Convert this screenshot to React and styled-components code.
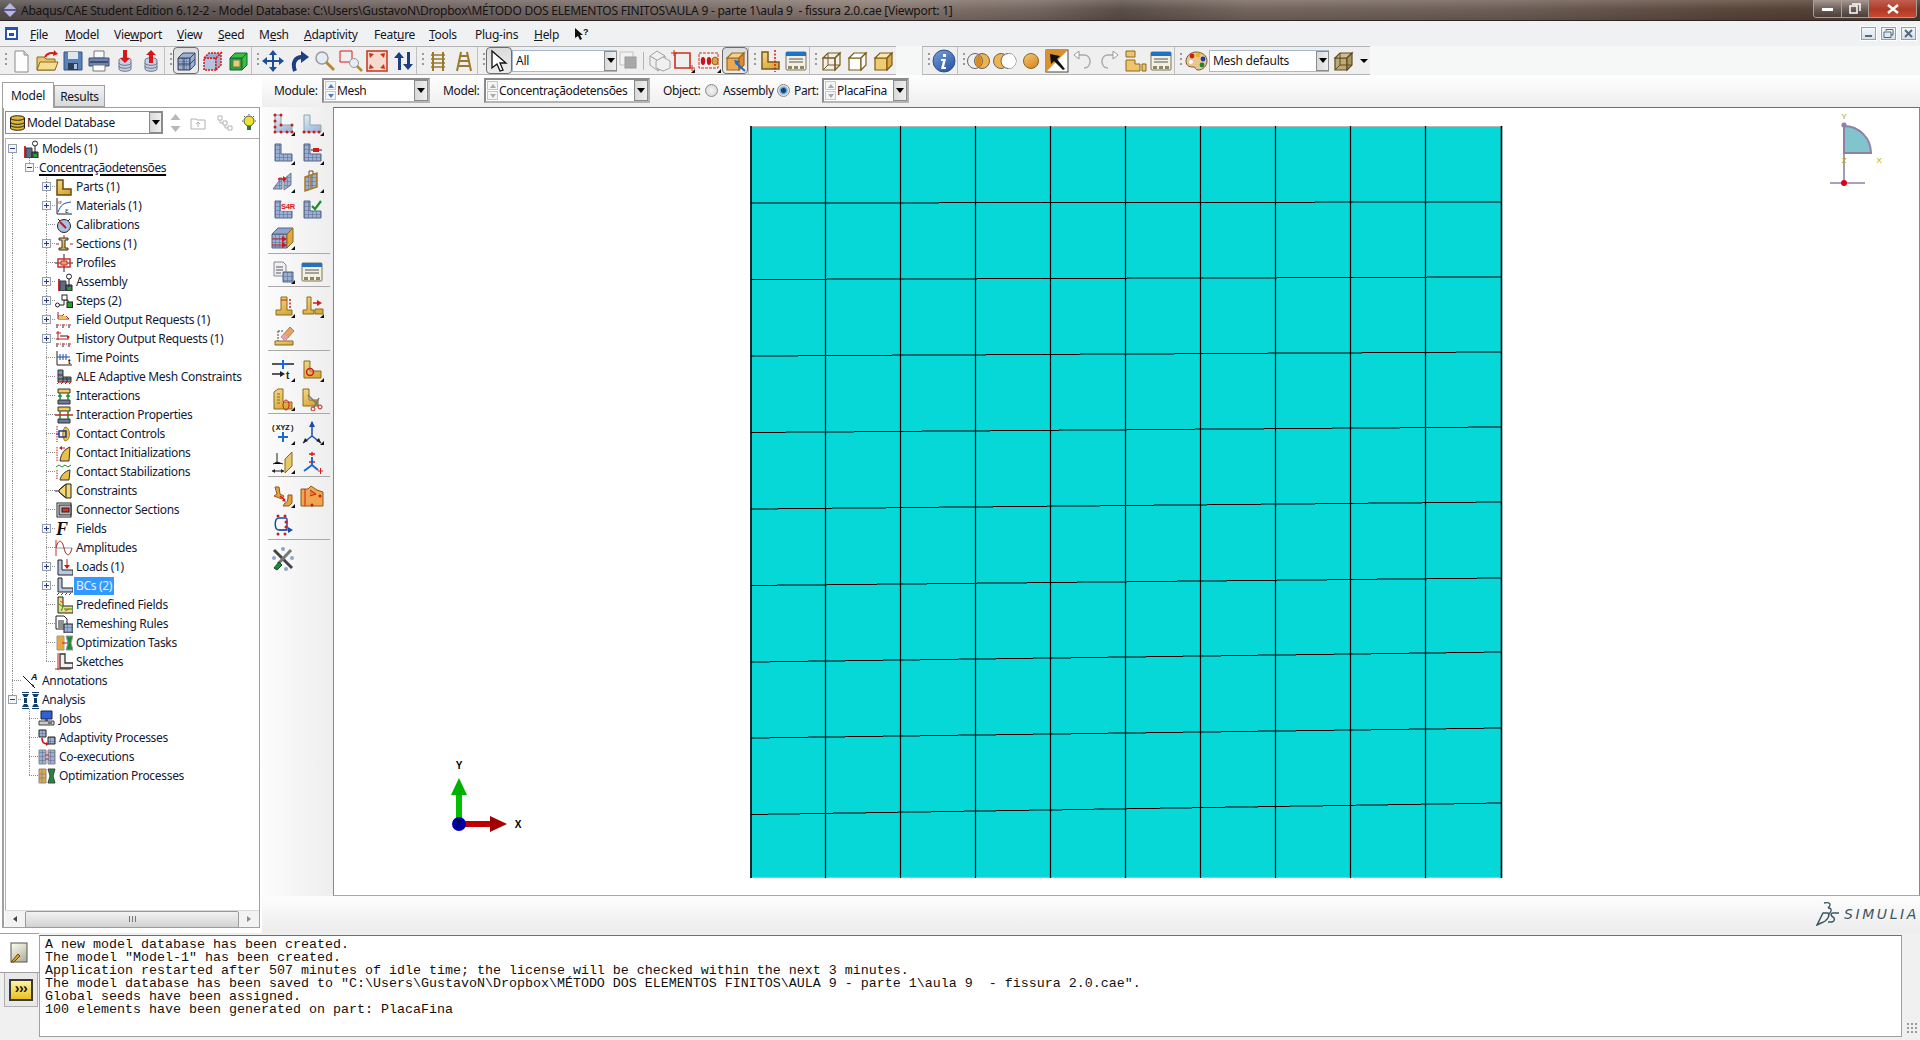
import React from "react";
import styled, { createGlobalStyle } from "styled-components";

const UI = `"Noto Sans", "Open Sans", "Liberation Sans", sans-serif`;

const Global = createGlobalStyle`
  html, body { margin: 0; padding: 0; overflow: hidden; background: #f0f0f0; }
  body { font-family: ${UI}; font-size: 12px; letter-spacing: -0.27px; color: #101828; }
`;

/* ---------- icons ---------- */
const Dots = ({ p, c = "#d01818", r = 1.5 }) => p.map(([x, y], i) => <circle key={i} cx={x} cy={y} r={r} fill={c} />);
const L = "M4 3h6v10h11v7H4z";
const MeshL = () => <path d={L} fill="url(#grid)" stroke="#56658a" />;
const GoldL = "M4 3h6v10h11v7H4z";
const Cube = ({ f = "none", s = "#7a5a18", t = "none", r = "none" }) => (
  <g stroke={s} strokeWidth="1.2">
    <path d="M4 9h12v12H4z" fill={f} />
    <path d="M4 9l5-5h12l-5 5z" fill={t} />
    <path d="M16 9l5-5v12l-5 5z" fill={r} />
  </g>
);
const Drum = ({ up }) => (
  <g>
    <path d="M6 11c0-3 12-3 12 0v9c0 3-12 3-12 0z" fill="#c6cfdd" stroke="#6a7790" />
    <path d="M6 14c0 3 12 3 12 0M6 17c0 3 12 3 12 0" fill="none" stroke="#6a7790" />
    <path d={up ? "M12 1l5 5h-3v8h-4V6H7z" : "M10 1h4v8h3l-5 5-5-5h3z"} fill="#d81818" />
  </g>
);
const Win = () => (
  <g>
    <rect x="2" y="3" width="20" height="18" rx="1" fill="#f3efe2" stroke="#7d7458" />
    <rect x="2" y="3" width="20" height="4" fill="#1f73c4" />
    <path d="M5 10h14M5 13h14" stroke="#555" />
    <path d="M4 17h4v3H4zM10 17h4v3h-4zM16 17h4v3h-4z" fill="#8f8663" />
  </g>
);
const Rail = () => <g stroke="#9a7a2c" strokeWidth="2"><path d="M7 3v19M17 3v19" /><path d="M5 6h14M5 10h14M5 14h14M5 18h14" strokeWidth="1.5" /></g>;

const T = {
  /* toolbar */
  new: <><path d="M6 2h9l4 4v17H6z" fill="#fdfdfd" stroke="#8a8a8a" /><path d="M15 2v4h4" fill="#ddd" stroke="#8a8a8a" /></>,
  open: <><path d="M2 8h7l2 2h9v11H2z" fill="#e9c568" stroke="#8a6a1a" /><path d="M2 21l3-8h18l-3 8z" fill="#f6dc8e" stroke="#8a6a1a" /><path d="M10 8c2-4 7-5 10-3" fill="none" stroke="#d81818" strokeWidth="2" /><path d="M19 1l4 4-5 2z" fill="#d81818" /></>,
  save: <><path d="M3 3h18v18H3z" fill="#5b82b8" stroke="#33537f" /><path d="M7 3h10v7H7z" fill="#dfe6ee" /><path d="M7 14h10v7H7z" fill="#2c3d58" /><path d="M13 15h3v5h-3z" fill="#b7c3d3" /></>,
  print: <><path d="M7 2h10v7H7z" fill="#fafafa" stroke="#777" /><path d="M2 9h20v8H2z" fill="#6c86b4" stroke="#3e4f72" /><path d="M3 12h18v2H3z" fill="#3e4f72" /><path d="M6 16h12v6H6z" fill="#fff" stroke="#777" /></>,
  dbDown: <Drum />,
  dbUp: <Drum up />,
  wire: <><path d="M4 9h12v12H4z" fill="url(#grid)" stroke="#39455f" /><path d="M4 9l5-5h12l-5 5zM16 9l5-5v12l-5 5z" fill="#9cb0d2" stroke="#39455f" /><path d="M10 9v12M4 15h12M16 15l5-5" stroke="#39455f" /></>,
  hidden: <><path d="M4 9h12v12H4z" fill="#b4c4e0" stroke="#d81818" strokeDasharray="2 1" strokeWidth="1.5" /><path d="M4 9l5-5h12l-5 5zM16 9l5-5v12l-5 5z" fill="#9db0d4" stroke="#d81818" strokeDasharray="2 1" strokeWidth="1.5" /></>,
  shaded: <><path d="M4 9h12v12H4z" fill="#2da32d" stroke="#164" /><path d="M4 9l5-5h12l-5 5zM16 9l5-5v12l-5 5z" fill="#3cc03c" stroke="#164" /><path d="M7 11h7v7H7z" fill="#e0d07c" stroke="#775" /></>,
  move: <g fill="#1d4f96"><path d="M11 6h2v12h-2zM6 11h12v2H6z" /><path d="M12 1l4 5H8zM12 23l4-5H8zM1 12l5-4v8zM23 12l-5-4v8z" /></g>,
  rotate: <><path d="M8 22c-3-8 0-14 7-14" fill="none" stroke="#1d3f80" strokeWidth="4" /><path d="M14 2l8 6-8 6z" fill="#1d3f80" /></>,
  zoom: <><circle cx="9" cy="9" r="6" fill="#e4ecf5" stroke="#9a9a9a" strokeWidth="1.5" /><path d="M13 13l8 8" stroke="#b58a34" strokeWidth="3" /></>,
  boxZoom: <><path d="M1 2h12v11H1z" fill="none" stroke="#d81818" /><circle cx="15" cy="14" r="4.5" fill="#e4ecf5" stroke="#999" /><path d="M18 17l5 5" stroke="#b58a34" strokeWidth="2.5" /></>,
  fit: <><rect x="2" y="2" width="20" height="20" fill="#f6dad0" stroke="#c8341c" strokeWidth="1.5" /><path d="M4 4l5 1-4 4zM20 4l-1 5-4-4zM4 20l1-5 4 4zM20 20l-5-1 4-4z" fill="#c8341c" /></>,
  cycle: <g fill="#1d3f80"><path d="M6 3l5 6H8v12H5V9H1z" transform="translate(2)" /><path d="M14 3h3v12h3l-5 6-5-6h4z" transform="translate(2)" /></g>,
  rail: <Rail />,
  rail2: <g stroke="#9a7a2c" strokeWidth="2"><path d="M9 3L5 22M15 3l4 19" /><path d="M8 7h8M7 12h10M6 17h12" strokeWidth="2" /></g>,
  select: <path d="M5 2v17l5-4 3 7 3-1-3-7h6z" fill="#fff" stroke="#111" strokeWidth="1.3" />,
  overlay: <><rect x="3" y="3" width="13" height="13" fill="#f2f2f2" stroke="#c4c4c4" /><rect x="8" y="8" width="11" height="11" fill="#a8a8a8" stroke="#9a9a9a" /></>,
  graycube: <g stroke="#a4a4a4" fill="#f0f0f0"><path d="M2 7l7-5 8 5-7 5z" /><path d="M2 7v9l8 6v-10zM10 12l7-5v9l-7 6z" /><path d="M8 12l7-4 7 4v7l-7 3-7-3z" /></g>,
  redRect: <><path d="M4 4h15v15H4z" fill="none" stroke="#c8341c" strokeWidth="1.6" /><path d="M1 1v6M-2 4h6M19 16v6M16 19h6" stroke="#c8341c" transform="translate(2)" /></>,
  redOval: <><path d="M2 4h19v15H2z" fill="none" stroke="#c8341c" strokeDasharray="3 1" /><ellipse cx="6" cy="12" rx="2.2" ry="4" fill="#c8141c" /><ellipse cx="12" cy="12" rx="2.2" ry="4" fill="#c8141c" /><ellipse cx="18" cy="12" rx="3" ry="4" fill="#e0a040" stroke="#8a6a1a" /></>,
  orangeCube: <><Cube f="#f0a850" t="#f8cf8a" r="#dd8a30" s="#9a6a20" /><path d="M22 22l-9-8" stroke="#1a6ad0" strokeWidth="2" /><path d="M11 11l6 1-4 4z" fill="#1a6ad0" /></>,
  lSplit: <><path d={GoldL} fill="url(#gold)" stroke="#7a5a18" strokeWidth="1.5" /><path d="M17 1v22" stroke="#d81818" strokeWidth="1.5" strokeDasharray="2 1.5" /></>,
  table: <Win />,
  cubeWire: <><Cube s="#7a5a18" /><path d="M9 4v12h12M9 16l-5 5" stroke="#7a5a18" fill="none" /></>,
  cubeOpen: <Cube f="#fff" t="#fff" r="#fff" />,
  cubeGold: <Cube f="#f0cc6e" t="#f9e6ae" r="#d9ac48" />,
  info: <><circle cx="12" cy="12" r="11" fill="url(#info)" stroke="#2e4f8f" /><path d="M14 5h-3v3h3zM9 10h5l-2 8h2v2H9l2-8H9z" fill="#fff" /></>,
  ov1: <><circle cx="15" cy="12" r="7.5" fill="#f0b44e" stroke="#666" /><circle cx="8" cy="12" r="7.5" fill="none" stroke="#666" /><path d="M11.5 6a7.5 7.5 0 0 0 0 12a7.5 7.5 0 0 0 0-12z" fill="#d98a20" /></>,
  ov2: <><circle cx="8" cy="12" r="7.5" fill="#f0b44e" stroke="#666" /><circle cx="15.5" cy="12" r="7.5" fill="#fff" stroke="#666" /><path d="M15.5 4.5a7.5 7.5 0 0 1 0 15" fill="#fff" /></>,
  ov3: <circle cx="12" cy="12" r="7.5" fill="url(#gold2)" stroke="#8a6a1a" />,
  arrowBox: <><rect x="1" y="1" width="22" height="22" fill="#fff" stroke="#444" /><path d="M1 1h22L1 23z" fill="#d89030" /><path d="M5 5l10 2-3 3 8 10-2 1-9-9-3 3z" fill="#111" /></>,
  undo: <><path d="M7 6h6c8 0 8 13 0 13" fill="none" stroke="#aaa" strokeWidth="1.5" /><path d="M8 2v8L3 6z" fill="#fff" stroke="#999" /></>,
  redo: <><path d="M17 6h-6c-8 0-8 13 0 13" fill="none" stroke="#aaa" strokeWidth="1.5" /><path d="M16 2v8l5-4z" fill="#fff" stroke="#999" /></>,
  boxes: <g fill="#f0c468" stroke="#8a6a1a"><path d="M3 2h9v6H3zM3 11h9v4h5v7H3z" /><path d="M19 15h4v7h-4z" /></g>,
  palette: <><path d="M12 3c7 0 11 4 11 9s-4 9-9 9c-3 0-2-3-4-3-3 0-8 0-8-6 0-5 5-9 10-9z" fill="#e8c690" stroke="#7a5a28" /><Dots p={[[8, 7]]} c="#d81818" r="2.4" /><Dots p={[[14, 6]]} c="#e8b818" r="2.4" /><Dots p={[[19, 10]]} c="#1838b8" r="2.4" /><Dots p={[[18, 16]]} c="#188830" r="2.4" /><Dots p={[[7, 13]]} c="#fff" r="2" /></>,
  oliveCube: <><Cube f="#bda878" t="#cfbc92" r="#a89464" s="#5e4c20" /><path d="M9 4v12h12M9 16l-5 5" stroke="#5e4c20" fill="none" /></>,
  /* toolbox */
  seedPart: <><path d={L} fill="url(#blue)" stroke="#8aa" /><Dots p={[[4, 3], [10, 3], [4, 9], [4, 15], [4, 20], [10, 13], [10, 20], [16, 20], [21, 20], [21, 13]]} /></>,
  seedEdge: <><path d={L} fill="url(#blue)" stroke="#8aa" /><Dots p={[[4, 20], [9, 20], [14, 20], [19, 20]]} /></>,
  meshL: <MeshL />,
  meshBar: <><MeshL /><path d="M11 9h11" stroke="#222" /><path d="M13 7h6v4h-6z" fill="#d81818" /></>,
  meshMove: <><path d="M2 20l6-8v-3l3 0v11z" fill="url(#grid)" stroke="#778" /><path d="M13 10l7-6v12l-7 5z" fill="url(#grid)" stroke="#778" /><path d="M7 10h6" stroke="#d81818" strokeWidth="1.5" /><path d="M12 7l4 3-4 3z" fill="#d81818" /></>,
  meshFrame: <><path d="M5 8l12-4v14L5 22z" fill="url(#grid)" stroke="#b07818" strokeWidth="1.5" /><path d="M11 6v14" stroke="#b07818" strokeWidth="1.5" /><path d="M9 6V2h4v3" fill="none" stroke="#555" /></>,
  meshS4R: <><MeshL /><rect x="10" y="4" width="14" height="9" fill="#f0f0f0" /><text x="10" y="11" fontSize="7.5" fontWeight="700" fontFamily="Liberation Sans" fill="#d81818">S4R</text></>,
  meshCheck: <><MeshL /><path d="M12 8l3 3 6-8" fill="none" stroke="#189028" strokeWidth="2.2" /></>,
  meshCube: <><path d="M1 8h15v14H1z" fill="url(#grid)" stroke="#56658a" /><path d="M1 8l6-6h15l-6 6z" fill="#8fa4c8" stroke="#56658a" /><path d="M16 8l6-6v14l-6 6z" fill="#e2a83a" stroke="#8a6a1a" /><path d="M1 13h11M1 19h11" stroke="#c81818" /><path d="M11 10l5 3-5 3zM11 16l5 3-5 3z" fill="#c81818" /></>,
  docMesh: <><path d="M3 2h9l3 3v11H3z" fill="#f0f0f0" stroke="#889" /><path d="M5 7h7M5 10h7M5 13h5" stroke="#556" /><path d="M12 12h10v10H12z" fill="url(#grid)" stroke="#56658a" /></>,
  tBeamDash: <><path d="M10 3h6v13h5v5H5v-5h5z" fill="url(#gold)" stroke="#8a6a1a" /><path d="M10 6h6" stroke="#d81818" /><path d="M19 5v10" stroke="#d81818" strokeDasharray="2 1.5" strokeWidth="1.5" /></>,
  tBeamArrow: <><path d="M7 3h4v13h3v4H3v-4h4zM15 15h8v5h-8z" fill="url(#gold)" stroke="#8a6a1a" /><path d="M13 9h6" stroke="#d81818" strokeWidth="1.5" /><path d="M17 6l5 3-5 3z" fill="#d81818" /></>,
  eraser: <><path d="M4 18h18v4H4z" fill="url(#gold)" stroke="#8a6a1a" /><path d="M7 8v10M7 8h5" stroke="#444" strokeDasharray="2 1" /><path d="M10 14l9-10 4 4-9 10z" fill="#f0a060" stroke="#887" /><path d="M10 14l4 4 3-3-4-4z" fill="#e8a0b8" /></>,
  dtLine: <><path d="M1 6h9M14 6h9" stroke="#222" strokeWidth="1.5" /><path d="M12 2v9M8 6h8" stroke="#1a6ad0" strokeWidth="2" /><path d="M1 16h10" stroke="#222" strokeWidth="1.5" /><path d="M9 13l5 3-5 3z" fill="#222" /><text x="15" y="21" fontSize="10" fontWeight="700" fontFamily="Liberation Sans" fill="#222">t</text></>,
  lCircle: <><path d={GoldL} fill="url(#gold)" stroke="#8a6a1a" /><circle cx="10" cy="14" r="3.5" fill="none" stroke="#d81818" strokeWidth="1.5" /></>,
  lBlock: <><path d="M3 5l4-3h5v13h9v7H3z" fill="url(#gold)" stroke="#8a6a1a" /><path d="M6 7h3M6 10h3M6 13h3M6 16h3" stroke="#8a6a1a" /><ellipse cx="15" cy="18" rx="3" ry="5" fill="none" stroke="#d81818" /></>,
  lScissors: <><path d="M3 2h6v11h9v6H3z" fill="url(#gold)" stroke="#8a6a1a" /><path d="M8 8l10 10M19 11l-5 9" stroke="#777" strokeWidth="1.5" /><circle cx="20" cy="20" r="2" fill="none" stroke="#c81818" /><circle cx="13" cy="22" r="2" fill="none" stroke="#c81818" /></>,
  xyz: <><text x="0" y="9" fontSize="8" fontWeight="700" fontFamily="Liberation Mono" letterSpacing="-0.1" fill="#222">(XYZ)</text><path d="M12 11v10M7 16h10" stroke="#1a6ad0" strokeWidth="2" /></>,
  axes: <><path d="M12 1v14M12 15L3 22M12 15l9 7" stroke="#1a4ab0" strokeWidth="1.5" /><path d="M12 0l3 6H9z" fill="#1a4ab0" /><path d="M3 22l2-5 3 3zM21 22l-2-5-3 3z" fill="#222" /></>,
  axesPlane: <><path d="M14 9l7-7v14l-7 7z" fill="#e8c66a" stroke="#8a6a1a" /><path d="M6 3v9M2 14l4-2 6 2" stroke="#222" /><path d="M1 21h12" stroke="#222" /><path d="M1 21l3-2v4zM13 21l-3-2v4z" fill="#222" /></>,
  datum: <><path d="M12 2v4M9 4h6M9 12h6" stroke="#d81818" strokeWidth="1.4" /><path d="M12 7v8" stroke="#1a6ad0" strokeWidth="2" /><path d="M12 15L4 21M12 15l6 5" stroke="#1a6ad0" strokeWidth="2" /><path d="M18 21h5M20.5 18v6" stroke="#d81818" /></>,
  morph: <><path d="M4 3h4l1 7 4 2-2 3-8-3 3-2z" fill="#e8a040" stroke="#8a5a18" /><path d="M17 11h4v8l-3 3h-6l2-3c2 0 3-2 3-8z" fill="#e8a040" stroke="#8a5a18" /><path d="M9 12l5 4" stroke="#d81818" strokeWidth="1.5" /><path d="M15 18l-4-1 2-3z" fill="#d81818" /></>,
  morphSolid: <><path d="M1 5h7l3-3 6 4 6 2v14H1z" fill="#efa650" stroke="#8a5a18" /><path d="M5 5v17" stroke="#d81818" /><path d="M10 6l6 4-6 2" fill="#d8803a" stroke="#d81818" /><Dots p={[[20, 12], [12, 21]]} /></>,
  loop: <><path d="M8 5h7c1 0 1 1 1 2v8c0 1 0 2-1 2H8c-5 0-5-12 0-12z" fill="none" stroke="#1a4ab0" strokeWidth="1.5" /><path d="M8 17h10" stroke="#1a4ab0" /><path d="M17 14l5 3-5 3z" fill="#1a4ab0" /><Dots p={[[7, 3], [14, 3], [15, 9], [15, 14], [7, 21], [14, 21]]} /></>,
  tools: <><path d="M3 3l18 18" stroke="#444" strokeWidth="3" /><path d="M20 3L7 17" stroke="#777" strokeWidth="3" /><path d="M3 21l5-6 3 3-5 5z" fill="#1f8a3a" stroke="#0d4a1c" /><Dots p={[[3, 11], [21, 11], [15, 22], [12, 2]]} c="#8fa6c8" r="2" /></>,
  /* tree */
  model: <><path d="M3 6h2v12H3z" fill="#c83030" /><path d="M5 8h6v10H5z" fill="#5d6c80" stroke="#2e3a4c" /><path d="M11 12h6v6h-6z" fill="#4f5d70" stroke="#222" /><path d="M13 14h3v3h-3z" fill="#28a028" /><circle cx="14" cy="3.5" r="2.5" fill="#fff" stroke="#222" /><path d="M14 6v8" stroke="#222" /></>,
  parts: <path d="M2 2h6v9h8v6H2z" fill="url(#gold)" stroke="#6a4a0a" strokeWidth="1.5" />,
  mat: <><path d="M2 1v16h15" fill="none" stroke="#222" /><path d="M3 15c3-7 5-9 13-10" fill="none" stroke="#1a4ab0" /><text x="10" y="16" fontSize="9" fontFamily="Liberation Serif" fill="#222">ε</text><text x="3" y="7" fontSize="7" fontFamily="Liberation Serif" fill="#222">σ</text></>,
  calib: <><circle cx="9" cy="10" r="6.5" fill="#aebfe0" stroke="#222" /><path d="M5 6l6 6" stroke="#c81818" strokeWidth="2" /><path d="M3 3l2 2M15 3l-2 2" stroke="#222" /></>,
  sect: <><path d="M4 3h9v2h-3v8h3v2H4v-2h3V5H4z" fill="url(#gold)" stroke="#333" /><path d="M9 0v3M15 9h3M1 9h3" stroke="#c81818" /></>,
  prof: <><path d="M9 0v18M0 9h18" stroke="#222" /><rect x="3" y="5" width="12" height="8" fill="none" stroke="#c83030" strokeWidth="1.5" /><rect x="6" y="7" width="6" height="4" fill="#f0a060" stroke="#c83030" /></>,
  steps: <><circle cx="2.5" cy="13" r="2" fill="#fff" stroke="#222" /><path d="M5 13h4M9 13V8h4v3" fill="none" stroke="#222" /><rect x="7" y="3" width="5" height="5" fill="#fff" stroke="#222" /><rect x="12" y="10" width="5.5" height="5.5" fill="#28a028" stroke="#222" /></>,
  field: <><path d="M3 1v7h11l-3-3M3 5h4l2-2" fill="none" stroke="#a02020" /><path d="M4 5h7v3H4z" fill="#f0c060" /><path d="M2 13v4M8 13v4M14 13v4" stroke="#222" /><path d="M3 14h3M9 14h3M15 14h2" stroke="#c81818" strokeDasharray="1 1" /></>,
  hist: <><path d="M3 1v9M1 3h5M1 9h13" stroke="#c81818" /><path d="M12 5l3 2-3 2z" fill="#c81818" /><path d="M5 6h7" stroke="#222" /><path d="M2 13v4M8 13v4M14 13v4" stroke="#222" /><path d="M3 14h3M9 14h3M15 14h2" stroke="#c81818" strokeDasharray="1 1" /></>,
  time: <><path d="M2 2v14h15" fill="none" stroke="#222" /><path d="M2 8h13M5 5v6M8 5v6M11 5v6" stroke="#1a4ab0" /><text x="13" y="15" fontSize="8" fontWeight="700" fontFamily="Liberation Sans" fill="#222">t</text></>,
  ale: <><path d="M3 2h5v7h8v5H3z" fill="#8090a8" stroke="#333" /><path d="M3 7h5M3 11h13M8 9v5M12 9v5" stroke="#333" /><path d="M2 16l2-2M6 16l2-2M10 16l2-2M14 16l2-2" stroke="#c81818" /></>,
  inter: <><path d="M3 2h12v4H3z" fill="#f0cc60" stroke="#333" /><path d="M3 13h12v4H3z" fill="#7078a0" stroke="#333" /><path d="M5 6v7M13 6v7M3 9h4M11 9h4" stroke="#189028" strokeWidth="1.5" /></>,
  interP: <><path d="M3 1h12v4H3z" fill="#f0cc60" stroke="#333" /><path d="M3 13h12v4H3z" fill="#7078a0" stroke="#333" /><path d="M5 5v8M13 5v8" stroke="#189028" strokeWidth="1.5" /><path d="M0 9h18" stroke="#c83030" strokeWidth="1.6" /></>,
  contact: <><path d="M2 1v16" stroke="#c81818" strokeDasharray="1.5 1" /><path d="M10 2c6 0 6 14 0 14-3-4-3-10 0-14z" fill="#e8c050" stroke="#a08020" /><rect x="4" y="6" width="7" height="6" fill="none" stroke="#1a2a90" strokeWidth="1.4" /><path d="M1 9h3" stroke="#1a2a90" /></>,
  contactI: <><path d="M2 3v14" stroke="#c81818" strokeDasharray="1.5 1" /><path d="M5 17c1-8 5-12 10-14l-1 14z" fill="#e8c050" stroke="#333" /><path d="M10 4H5" stroke="#c81818" /><path d="M4 4l3-2v4z" fill="#c81818" /></>,
  contactS: <><path d="M1 4l3-2 3 2 3-2 3 2 3-2" fill="none" stroke="#189028" /><path d="M2 7v10" stroke="#c81818" strokeDasharray="1.5 1" /><path d="M5 17c1-5 5-9 10-10l-1 10z" fill="#e8c050" stroke="#333" /></>,
  constr: <><path d="M11 2h5v14h-5L4 10V8z" fill="#f5d870" stroke="#222" /><path d="M4 9H0M11 2L4 8M11 16l-7-6" stroke="#222" /><path d="M11 2v14" stroke="#222" /></>,
  conn: <><rect x="2" y="2" width="14" height="14" fill="#fff" stroke="#222" /><rect x="4" y="4" width="12" height="10" fill="#b8b8b8" stroke="#222" /><rect x="7" y="7" width="7" height="4" fill="#d83030" stroke="#222" /></>,
  fields: <text x="1" y="15" fontSize="18" fontStyle="italic" fontWeight="700" fontFamily="Liberation Serif" fill="#111">F</text>,
  ampl: <><path d="M1 1v16" stroke="#c83030" /><path d="M1 9h16" stroke="#999" /><path d="M1 9c2-9 6-9 8 0s6 9 8 0" fill="none" stroke="#a02020" /></>,
  loads: <><path d="M3 2h4v10h11v5H3z" fill="#b8c8e4" stroke="#222" /><path d="M12 1v8" stroke="#c81818" /><path d="M9 7h6l-3 4z" fill="#c81818" /></>,
  bcs: <><path d="M3 1h4v10h11v4H3z" fill="#b8c8e4" stroke="#222" /><path d="M2 18l2-2M6 18l2-2M10 18l2-2M14 18l2-2" stroke="#c81818" /></>,
  pre: <><path d="M3 1h5v9h10v7H3z" fill="#e8e080" stroke="#222" /><path d="M4 8l4 3-2 4M9 13h8" stroke="#189028" fill="none" /><path d="M5 5l3 2M10 15l4-2" stroke="#e04040" /></>,
  remesh: <><path d="M1 1h8l3 3v10H1z" fill="#fff" stroke="#222" /><path d="M3 6h6M3 8h6M3 10h6M3 12h6" stroke="#222" /><path d="M9 9h9v9H9z" fill="url(#grid)" stroke="#222" /></>,
  opt: <><path d="M2 2h7v14H2z" fill="#e8a840" stroke="#999" /><path d="M11 2h7l-2 7 2 7h-7l2-7z" fill="#1f8a3a" stroke="#999" /><path d="M7 9h6" stroke="#c81818" /></>,
  sketch: <><path d="M3 0v17M0 16h16" stroke="#c81818" /><path d="M5 1h5v9h8v5H5z" fill="#f0f0f0" stroke="#333" strokeWidth="1.3" /></>,
  annot: <><path d="M2 4l12 12" stroke="#111" /><path d="M10 12l3 1-1 2z" fill="#111" /><text x="10" y="8" fontSize="9" fontWeight="700" fontStyle="italic" fontFamily="Liberation Sans" fill="#111">A</text></>,
  analysis: <g fill="#10406a"><path d="M1 3h7L6 6H3zM1 16h7l-2-3H3zM3 7h3v5H3zM11 3h7l-2 3h-3zM11 16h7l-2-3h-3zM13 7h3v5h-3z" /><path d="M1 1h7v1H1zM11 1h7v1h-7zM1 17h7v1H1zM11 17h7v1h-7z" /></g>,
  jobs: <><path d="M3 1h11v8H3z" fill="#3060d8" stroke="#222" /><path d="M7 9h3v2H7z" fill="#555" /><path d="M1 11h15v4H1z" fill="#c8c8c8" stroke="#444" /><path d="M10 13h4" stroke="#222" /></>,
  adapt: <><path d="M1 1h7v7H1z" fill="url(#grid)" stroke="#222" /><path d="M10 8h7v7h-7z" fill="url(#grid)" stroke="#222" /><path d="M4 9c0 4 1 6 5 6" fill="none" stroke="#c81818" strokeWidth="1.6" /><path d="M8 13l3 2-3 2z" fill="#c81818" /></>,
  coex: <><path d="M1 2h7v14H1zM10 2h7v14h-7z" fill="url(#grid)" stroke="#888" /><path d="M7 7h4M7 11h4" stroke="#c81818" /></>,
  opt2: <><path d="M1 2h7v14H1z" fill="#e8a840" stroke="#888" /><path d="M1 7h7M1 11h7M4 2v14" stroke="#888" /><path d="M10 2h7l-2 7 2 7h-7l2-7z" fill="#1f8a3a" stroke="#444" /></>,
  note: <><rect x="3" y="2" width="16" height="19" fill="url(#page)" stroke="#555" /><path d="M4 20l6-7 2 2-6 6H3z" fill="#d8a020" stroke="#6a4a0a" /></>,
};

const Svg = styled.svg`
  display: block;
  flex: none;
`;

const Icon = ({ n, fly, box = 24 }) => (
  <Svg width={box} height={box} viewBox={`0 0 ${box} ${box}`}>
    {T[n]}
    {fly && <path d="M24 20v4h-4z" fill="#111" />}
  </Svg>
);

const Defs = styled.svg`
  display: block;
  width: 0;
  height: 0;
`;

const grad = (id, a, b) => (
  <linearGradient id={id} x1="0" y1="0" x2="0.6" y2="1">
    <stop offset="0" stopColor={a} />
    <stop offset="1" stopColor={b} />
  </linearGradient>
);

/* ---------- window chrome ---------- */
const Page = styled.div`
  width: 1920px;
  height: 1040px;
  display: flex;
  flex-direction: column;
  overflow: hidden;
  background: #f0f0f0;
`;

const TitleBar = styled.div`
  height: 20px;
  flex: none;
  display: flex;
  align-items: center;
  padding: 0 3px 0 2px;
  border-bottom: 1px solid #2b2422;
  background:
    linear-gradient(180deg, rgba(255, 255, 255, 0.16), rgba(255, 255, 255, 0) 45%, rgba(0, 0, 0, 0.14)),
    linear-gradient(90deg, #57504f 0, #6a5d5a 300px, #7a6d68 700px, #8a7a72 860px, #74665f 1040px, #5c4f49 1120px, #75675f 1250px, #6e5f57 1500px, #5b483d 1720px, #4e3a2e 1920px);
`;

const TitleText = styled.span`
  margin-left: 3px;
  font-size: 12px;
  letter-spacing: -0.24px;
  color: #141414;
  white-space: pre;
`;

const WinButtons = styled.div`
  margin-left: auto;
  display: flex;
  height: 17px;
  align-self: flex-start;
  border: 1px solid #a8a098;
  border-top: none;
  border-radius: 0 0 4px 4px;
  overflow: hidden;
`;

const WinButton = styled.div`
  width: ${(p) => p.$w}px;
  display: grid;
  place-items: center;
  border-left: ${(p) => (p.$first ? "none" : "1px solid #a8a098")};
  background: ${(p) =>
    p.$close
      ? "linear-gradient(180deg, #c06050, #b03a28 55%, #c84a30)"
      : "linear-gradient(180deg, #a89a92, #6a5c56 55%, #4a3e38)"};
`;

const MenuBar = styled.div`
  height: 25px;
  flex: none;
  display: flex;
  align-items: center;
  background: #f0f1f2;
  padding-right: 4px;
`;

const AppGlyph = styled.div`
  width: 13px;
  height: 13px;
  margin: 0 12px 0 5px;
  background: #fff;
  border: 2px solid #2a50b0;
  border-top-width: 3px;
  box-sizing: border-box;
  display: grid;
  place-items: center;
  flex: none;
  &::after {
    content: "";
    width: 5px;
    height: 3px;
    background: #2a50b0;
  }
`;

const MenuItem = styled.div`
  width: ${(p) => p.$w}px;
  flex: none;
  padding-top: 2px;
  font-size: 12px;
  color: #15151f;
  u { text-underline-offset: 1px; }
`;

const MdiGroup = styled.div`
  margin-left: auto;
  display: flex;
  gap: 5px;
`;

const MdiButton = styled.div`
  width: 15px;
  height: 13px;
  box-sizing: border-box;
  border: 1px solid #8ea2b4;
  background: linear-gradient(180deg, #f2f6fa, #d4e0ea);
  outline: 1px solid #fff;
  display: grid;
  place-items: center;
  color: #55697c;
`;

const ToolRow = styled.div`
  height: 29px;
  flex: none;
  display: flex;
  background: #f6f7f7;
`;

const ToolGroup = styled.div`
  flex: none;
  display: flex;
  align-items: center;
  height: 29px;
  box-sizing: border-box;
  padding-left: 5px;
  background: #efefef;
  border-top: 1px solid #b4b4b4;
  border-bottom: 1px solid #b4b4b4;
  border-left: ${(p) => (p.$first ? "none" : "1px solid #c0c0c0")};
  &::before {
    content: "";
    width: 2px;
    height: 15px;
    margin-right: 1px;
    background: repeating-linear-gradient(180deg, #9a9a9a 0 2px, transparent 2px 5px);
  }
`;

const ToolGap = styled.div`
  width: 26px;
  flex: none;
`;

const ToolSlot = styled.div`
  width: ${(p) => p.$w || 26}px;
  height: 27px;
  flex: none;
  display: grid;
  place-items: center;
`;

const Pressed = styled(ToolSlot)`
  box-sizing: border-box;
  border: 1px solid #6d6d6d;
  border-radius: 4px;
  background: linear-gradient(180deg, #dcdcdc, #ececec);
`;

const ThinRule = styled.div`
  width: 1px;
  height: 18px;
  margin: 0 4px;
  background: #b4b4b4;
  flex: none;
`;

const FlatCombo = styled.div`
  width: ${(p) => p.$w}px;
  height: 22px;
  box-sizing: border-box;
  flex: none;
  display: flex;
  align-items: center;
  background: #fff;
  border: 1px solid #a5b8cd;
  border-right: none;
  padding-left: 3px;
  font-size: 12px;
  color: #15151f;
`;

const ComboDrop = styled.div`
  width: ${(p) => p.$w || 13}px;
  align-self: stretch;
  margin-left: auto;
  background: linear-gradient(90deg, #d9d9d9, #efefef);
  border: 1px solid #8b8b8b;
  box-sizing: border-box;
  display: grid;
  place-items: center;
  &::after {
    content: "";
    border-left: 4px solid transparent;
    border-right: 4px solid transparent;
    border-top: 5px solid #000;
  }
`;

const BareDrop = styled.div`
  width: 13px;
  flex: none;
  display: grid;
  place-items: center;
  &::after {
    content: "";
    border-left: 4px solid transparent;
    border-right: 4px solid transparent;
    border-top: 4px solid #000;
  }
`;

/* ---------- body ---------- */
const Body = styled.div`
  flex: none;
  height: 858px;
  display: flex;
`;

const LeftPanel = styled.div`
  width: 262px;
  flex: none;
  display: flex;
  flex-direction: column;
  background: #fff;
  padding: 7px 0 5px 2px;
  box-sizing: border-box;
`;

const Tabs = styled.div`
  display: flex;
  align-items: flex-end;
  height: 25px;
  flex: none;
`;

const Tab = styled.div`
  height: ${(p) => (p.$on ? 26 : 22)}px;
  width: ${(p) => p.$w}px;
  box-sizing: border-box;
  border: 1px solid #a0a0a0;
  border-bottom: ${(p) => (p.$on ? "none" : "1px solid #a0a0a0")};
  background: ${(p) => (p.$on ? "#fff" : "linear-gradient(180deg, #f2f2f2, #d9d9d9)")};
  display: grid;
  place-items: center;
  font-size: 12px;
  margin-bottom: ${(p) => (p.$on ? "-1px" : "0")};
  position: relative;
`;

const PanelFrame = styled.div`
  flex: 1;
  min-height: 0;
  width: 258px;
  box-sizing: border-box;
  display: flex;
  flex-direction: column;
  border: 1px solid #a0a0a0;
  border-left: 2px solid #a0a0a0;
  padding: 3px 0 0 1px;
`;

const DbRow = styled.div`
  height: 23px;
  flex: none;
  display: flex;
  align-items: center;
  margin-bottom: 4px;
`;

const DbCombo = styled.div`
  width: 158px;
  height: 23px;
  box-sizing: border-box;
  flex: none;
  display: flex;
  align-items: center;
  border: 1px solid #8c8c8c;
  padding-left: 2px;
  font-size: 12px;
  color: #15151f;
  margin-right: 6px;
`;

const DbSlot = styled.div`
  width: ${(p) => p.$w}px;
  flex: none;
  display: grid;
  place-items: center;
`;

const TreeBox = styled.div`
  flex: 1;
  min-height: 0;
  border-top: 1px solid #b0b0b0;
  border-left: 1px solid #b0b0b0;
`;

const TreeRows = styled.div`
  margin-left: -2px;
  display: flex;
  flex-direction: column;
`;

const Row = styled.div`
  display: flex;
  align-items: center;
  height: 19px;
`;

const DOT_V = "repeating-linear-gradient(180deg, #8f8f8f 0 1px, transparent 1px 2px)";
const DOT_H = "repeating-linear-gradient(90deg, #8f8f8f 0 1px, transparent 1px 2px)";
const cellBg = {
  b: "none",
  p: `${DOT_V} 8px 0 / 1px 100% no-repeat`,
  t: `${DOT_V} 8px 0 / 1px 100% no-repeat, ${DOT_H} 8px 9px / 9px 1px no-repeat`,
  e: `${DOT_V} 8px 0 / 1px 10px no-repeat, ${DOT_H} 8px 9px / 9px 1px no-repeat`,
  s: `${DOT_V} 8px 10px / 1px 9px no-repeat`,
};

const Cell = styled.div`
  width: 17px;
  height: 19px;
  flex: none;
  display: grid;
  place-items: center;
  background: ${(p) => cellBg[p.$k]};
`;

const Expander = styled.div`
  width: 9px;
  height: 9px;
  box-sizing: border-box;
  margin-bottom: 1px;
  border: 1px solid #93a0ac;
  background-color: #f4f6f8;
  background-image:
    linear-gradient(#2a3a7a, #2a3a7a),
    ${(p) => (p.$open ? "none" : "linear-gradient(#2a3a7a, #2a3a7a)")};
  background-repeat: no-repeat;
  background-size: 5px 1px, 1px 5px;
  background-position: center, center;
`;

const TreeIcon = styled.div`
  width: 18px;
  height: 18px;
  flex: none;
  margin-right: 1px;
`;

const Label = styled.span`
  font-size: 12px;
  letter-spacing: -0.31px;
  line-height: 18px;
  padding: 0 2px;
  white-space: nowrap;
  color: ${(p) => (p.$sel ? "#e8f2ff" : "#101a38")};
  background: ${(p) => (p.$sel ? "#3399ff" : "none")};
  ${(p) =>
    p.$model &&
    `margin-left:1px; padding:0; letter-spacing:-0.42px; text-decoration: underline; text-decoration-color:#000; text-decoration-thickness:2px; text-underline-offset:2px;`}
`;

const HScroll = styled.div`
  height: 16px;
  flex: none;
  display: flex;
  align-items: center;
  border-top: 1px solid #d8d8d8;
  background: #f3f3f3;
`;

const ScrollArrow = styled.div`
  width: 20px;
  display: grid;
  place-items: center;
  flex: none;
  &::after {
    content: "";
    border-top: 3px solid transparent;
    border-bottom: 3px solid transparent;
    ${(p) => (p.$left ? "border-right: 4px solid #444;" : "border-left: 4px solid #888;")}
  }
`;

const ScrollThumb = styled.div`
  flex: 1;
  height: 15px;
  border: 1px solid #9a9a9a;
  border-radius: 2px;
  background: linear-gradient(180deg, #f2f2f2, #d2d2d2);
  display: grid;
  place-items: center;
  &::after {
    content: "";
    width: 7px;
    height: 6px;
    background: repeating-linear-gradient(90deg, #777 0 1px, transparent 1px 3px);
  }
`;

const RightPane = styled.div`
  flex: 1;
  min-width: 0;
  display: flex;
  flex-direction: column;
`;

const ContextBar = styled.div`
  height: 32px;
  flex: none;
  display: flex;
  align-items: center;
  padding: 0 0 1px 12px;
  box-sizing: border-box;
  background: linear-gradient(180deg, #fefefe, #eeeeee);
  font-size: 12px;
  letter-spacing: -0.36px;
  color: #15151f;
`;

const CtxLabel = styled.span`
  flex: none;
  width: ${(p) => p.$w}px;
  white-space: nowrap;
`;

const CtxCombo = styled.div`
  width: ${(p) => p.$w}px;
  height: 25px;
  flex: none;
  box-sizing: border-box;
  display: flex;
  align-items: center;
  background: #fff;
  border: 2px solid #8a8a8a;
  border-color: #8a8a8a #b4b4b4 #b4b4b4 #8a8a8a;
  margin-right: ${(p) => p.$mr || 0}px;
`;

const Spin = styled.div`
  width: 11px;
  height: 19px;
  flex: none;
  margin: 0 1px 0 1px;
  display: flex;
  flex-direction: column;
  gap: 1px;
`;

const SpinPart = styled.div`
  flex: 1;
  box-sizing: border-box;
  border: 1px solid #c6c6c6;
  background: #f5f5f5;
  display: grid;
  place-items: center;
  &::after {
    content: "";
    border-left: 3px solid transparent;
    border-right: 3px solid transparent;
    ${(p) => (p.$down ? "border-top" : "border-bottom")}: 4px solid ${(p) => (p.$on ? "#4d7cc0" : "#aaa")};
  }
`;

const Radio = styled.div`
  width: 13px;
  height: 13px;
  border-radius: 50%;
  box-sizing: border-box;
  flex: none;
  margin-right: ${(p) => p.$mr}px;
  border: 1px solid #8a8a8a;
  background: ${(p) =>
    p.$on ? "radial-gradient(circle, #17426f 0 2px, #5aa2d8 3px, #e6e6e6 5px)" : "radial-gradient(circle, #f6f6f6, #d0d0d0)"};
`;

const WorkRow = styled.div`
  flex: 1;
  min-height: 0;
  display: flex;
`;

const Toolbox = styled.div`
  width: 71px;
  flex: none;
  box-sizing: border-box;
  padding: 0 3px 0 6px;
  background: linear-gradient(90deg, #fcfcfc, #eeeeee);
`;

const ToolSection = styled.div`
  display: grid;
  grid-template-columns: 29px 29px;
  grid-auto-rows: 28.5px;
  justify-items: center;
  align-items: center;
  padding-top: ${(p) => p.$top}px;
  padding-bottom: ${(p) => p.$bottom || 0}px;
  border-bottom: ${(p) => (p.$last ? "none" : "1px solid #a9a9a9")};
`;

const Viewport = styled.div`
  flex: 1;
  min-width: 0;
  box-sizing: border-box;
  height: 789px;
  position: relative;
  background: #fff;
  border-top: 1px solid #6e6e6e;
  border-left: 1px solid #8a8a8a;
  border-bottom: 1px solid #a8a8a8;
  border-right: 1px solid #8a8a8a;
`;

const Canvas = styled.svg`
  position: absolute;
  left: ${(p) => p.$x}px;
  top: ${(p) => p.$y}px;
`;

const LogoStrip = styled.div`
  height: 37px;
  flex: none;
  display: flex;
  align-items: flex-start;
  justify-content: flex-end;
  padding: 6px 1px 0 0;
  box-sizing: border-box;
  background: linear-gradient(180deg, #fdfdfd, #ececec);
`;

const SimuliaText = styled.span`
  font-family: "DejaVu Sans", sans-serif;
  font-size: 14px;
  line-height: 24px;
  letter-spacing: 2.6px;
  color: #3c5562;
  font-style: oblique;
  margin-left: 4px;
`;

/* ---------- messages ---------- */
const MessageRow = styled.div`
  flex: 1;
  min-height: 0;
  display: flex;
  background: #f0f0f0;
  padding-bottom: 3px;
`;

const MsgTabs = styled.div`
  width: 39px;
  flex: none;
  display: flex;
  flex-direction: column;
  align-items: flex-start;
`;

const MsgTab = styled.div`
  width: 39px;
  height: 40px;
  box-sizing: border-box;
  background: #fff;
  border: 1px solid #a0a0a0;
  border-right: none;
  border-left: none;
  display: grid;
  place-items: center;
`;

const MsgTabB = styled.div`
  width: 34px;
  height: 34px;
  margin-left: 4px;
  box-sizing: border-box;
  background: #e8e8e8;
  border: 1px solid #b0b0b0;
  border-top: none;
  display: grid;
  place-items: center;
`;

const YellowBtn = styled.div`
  width: 24px;
  height: 22px;
  box-sizing: border-box;
  border: 2px solid #3a3a3a;
  background: linear-gradient(180deg, #fff4a0, #e8c020);
  color: #111;
  font: 700 14px/15px "Liberation Sans", sans-serif;
  letter-spacing: -0.5px;
  text-align: center;
`;

const MsgBox = styled.pre`
  width: 1863px;
  margin: 2px 0 0 0;
  box-sizing: border-box;
  flex: none;
  background: #fff;
  border: 1px solid #a0a0a0;
  border-top-color: #707070;
  padding: 2px 0 0 5px;
  font-family: "Liberation Mono", monospace;
  font-size: 13.33px;
  letter-spacing: 0;
  line-height: 13px;
  color: #111;
`;

const Grip = styled.div`
  flex: 1;
  align-self: flex-end;
  height: 12px;
  margin: 0 2px 3px 4px;
  background: radial-gradient(circle, #9a9a9a 1px, transparent 1.2px) 0 0 / 4px 4px;
`;

/* ---------- data ---------- */
const menus = [
  ["", "F", "ile", 35], ["", "M", "odel", 49], ["Vie", "w", "port", 63], ["", "V", "iew", 41], ["", "S", "eed", 41],
  ["M", "e", "sh", 45], ["", "A", "daptivity", 70], ["Feat", "u", "re", 55], ["", "T", "ools", 46], ["Plu", "g", "-ins", 59], ["", "H", "elp", 40],
];

const box = (n, fly) => ({ n, fly });
const toolbox = [
  { top: 3, items: [box("seedPart", 1), box("seedEdge", 1), box("meshL", 1), box("meshBar", 1), box("meshMove", 1), box("meshFrame", 1), box("meshS4R"), box("meshCheck"), box("meshCube", 1)] },
  { top: 4, items: [box("docMesh", 1), box("table")] },
  { top: 5, items: [box("tBeamDash", 1), box("tBeamArrow", 1), box("eraser")] },
  { top: 5, items: [box("dtLine", 1), box("lCircle", 1), box("lBlock", 1), box("lScissors")] },
  { top: 5, items: [box("xyz", 1), box("axes", 1), box("axesPlane", 1), box("datum")] },
  { top: 5, items: [box("morph", 1), box("morphSolid"), box("loop")] },
  { top: 5, items: [box("tools")], last: true },
];

const L2 = (t, i, plus, extra) => ({ t, i, cells: ["p", "b", "t"], plus, ...extra });
const L1 = (t, i, last) => ({ t, i, cells: ["b", last ? "e" : "t"] });
const tree = [
  { t: "Models (1)", i: "model", cells: ["s"], minus: true },
  { t: "Concentraçãodetensões", cells: ["p", "e"], minus: true, model: true },
  L2("Parts (1)", "parts", true), L2("Materials (1)", "mat", true), L2("Calibrations", "calib"), L2("Sections (1)", "sect", true),
  L2("Profiles", "prof"), L2("Assembly", "model", true), L2("Steps (2)", "steps", true), L2("Field Output Requests (1)", "field", true),
  L2("History Output Requests (1)", "hist", true), L2("Time Points", "time"), L2("ALE Adaptive Mesh Constraints", "ale"),
  L2("Interactions", "inter"), L2("Interaction Properties", "interP"), L2("Contact Controls", "contact"),
  L2("Contact Initializations", "contactI"), L2("Contact Stabilizations", "contactS"), L2("Constraints", "constr"),
  L2("Connector Sections", "conn"), L2("Fields", "fields", true), L2("Amplitudes", "ampl"), L2("Loads (1)", "loads", true),
  L2("BCs (2)", "bcs", true, { sel: true }), L2("Predefined Fields", "pre"), L2("Remeshing Rules", "remesh"), L2("Optimization Tasks", "opt"),
  { t: "Sketches", i: "sketch", cells: ["p", "b", "e"] },
  { t: "Annotations", i: "annot", cells: ["t"] },
  { t: "Analysis", i: "analysis", cells: ["e"], minus: true },
  L1("Jobs", "jobs"), L1("Adaptivity Processes", "adapt"), L1("Co-executions", "coex"), L1("Optimization Processes", "opt2", true),
];

const messages = `A new model database has been created.
The model "Model-1" has been created.
Application restarted after 507 minutes of idle time; the license will be checked within the next 3 minutes.
The model database has been saved to "C:\\Users\\GustavoN\\Dropbox\\MÉTODO DOS ELEMENTOS FINITOS\\AULA 9 - parte 1\\aula 9  - fissura 2.0.cae".
Global seeds have been assigned.
100 elements have been generated on part: PlacaFina`;

const title = "Abaqus/CAE Student Edition 6.12-2 - Model Database: C:\\Users\\GustavoN\\Dropbox\\MÉTODO DOS ELEMENTOS FINITOS\\AULA 9 - parte 1\\aula 9  - fissura 2.0.cae [Viewport: 1]";

/* mesh: the horizontal lines lean a little, y at the left and right edge */
const leaning = [[203, 202], [279.5, 277], [356, 352], [432.5, 427], [509, 502], [585.5, 578], [662, 652], [738, 728], [814.5, 803]];
const MESH_X = 750;
const MESH_Y = 126;
const steps = (yl, yr) => {
  const out = [];
  let start = 0;
  let cur = Math.round(yl * 2) / 2;
  for (let x = 1; x <= 751; x++) {
    const q = Math.round((yl + ((yr - yl) * x) / 751) * 2) / 2;
    if (q !== cur || x === 751) {
      out.push([start, x, cur]);
      start = x;
      cur = q;
    }
  }
  return out;
};

const Mesh = () => (
  <Canvas $x={MESH_X - 334} $y={MESH_Y - 108} width="753" height="753" viewBox="0 0 753 753">
    <rect x="0.5" y="0" width="751" height="752" fill="#06d8d8" />
    <path d="M0 0.5h752M0 751.5h752" stroke="#b8b8b8" />
    {leaning.map(([a, b], i) =>
      steps(a - MESH_Y, b - MESH_Y).map(([x1, x2, y]) => (
        <line key={`${i}-${x1}`} x1={x1 + 1} x2={x2 + 1} y1={y} y2={y} stroke="#000" />
      ))
    )}
    {Array.from({ length: 11 }, (_, i) => {
      const x = Math.round(75.05 * i) + 0.5;
      const edge = i === 0 || i === 10;
      return <line key={i} x1={x + (i === 0 ? 0.5 : 0)} x2={x + (i === 0 ? 0.5 : 0)} y1="0" y2="752" stroke="#000" strokeWidth={edge ? 1.6 : 1.2} />;
    })}
  </Canvas>
);

const MiniTriad = () => (
  <Canvas $x={1825 - 334} $y={105 - 108} width="65" height="90" viewBox="0 0 65 90">
    <path d="M19 48V21a27 27 0 0 1 27 27z" fill="#80c4cc" stroke="#9080a8" strokeWidth="2" />
    <path d="M19 20v58M5 78h35" stroke="#9080a8" strokeWidth="1.6" />
    <circle cx="19" cy="20" r="2.6" fill="#9080a8" />
    <circle cx="19" cy="78" r="3" fill="#e00010" />
    <text x="19" y="14" fontSize="8" fontFamily="Liberation Sans" textAnchor="middle" fill="#b8a800">Y</text>
    <text x="54" y="58" fontSize="8" fontFamily="Liberation Sans" textAnchor="middle" fill="#b8a800">X</text>
    <text x="19" y="58" fontSize="8" fontFamily="Liberation Sans" textAnchor="middle" fill="#b8a800">Z</text>
  </Canvas>
);

const Triad = () => (
  <Canvas $x={445 - 334} $y={755 - 108} width="85" height="80" viewBox="0 0 85 80">
    <rect x="11" y="38" width="6" height="28" fill="#00c000" />
    <path d="M14 23l8 17H6z" fill="#00b000" />
    <rect x="20" y="66" width="26" height="6" fill="#c00000" />
    <path d="M62 69l-17 8V61z" fill="#a00000" />
    <circle cx="14" cy="69" r="7" fill="#0000b0" />
    <text x="14" y="73" fontSize="10" fontWeight="700" fontFamily="Liberation Sans" textAnchor="middle" fill="#000040">Z</text>
    <text x="14" y="14" fontSize="10" fontWeight="700" fontFamily="Liberation Sans" textAnchor="middle" fill="#000">Y</text>
    <text x="73" y="73" fontSize="10" fontWeight="700" fontFamily="Liberation Sans" textAnchor="middle" fill="#000">X</text>
  </Canvas>
);

const DsLogo = () => (
  <Svg width="24" height="24" viewBox="0 0 24 24">
    <path d="M8 1c6-1 8 1 4 5M12 6c4 0 4 3 1 6" fill="none" stroke="#3c5562" strokeWidth="1.3" />
    <path d="M1 23l6-12h5c2 2 0 8-7 10zM23 11h-6c-3 0-2 3 0 4s2 4-1 5h-4" fill="none" stroke="#3c5562" strokeWidth="1.5" />
  </Svg>
);

const tools = (names) => names.map((n) => <ToolSlot key={n}><Icon n={n} /></ToolSlot>);

const CtxDropCombo = ({ w, mr, text, on }) => (
  <CtxCombo $w={w} $mr={mr}>
    <Spin>
      <SpinPart $on={on} />
      <SpinPart $on={on} $down />
    </Spin>
    {text}
    <ComboDrop $w={14} />
  </CtxCombo>
);

export default function App() {
  return (
    <>
      <Global />
      <Defs>
        <defs>
          {grad("gold", "#f5d888", "#d8a83c")}
          {grad("gold2", "#f6c878", "#d88a28")}
          {grad("blue", "#e6edf8", "#a4b8dc")}
          {grad("info", "#7aa0d8", "#2e5aa8")}
          {grad("page", "#fffff2", "#b8b8a0")}
          <pattern id="grid" width="4" height="4" patternUnits="userSpaceOnUse">
            <rect width="4" height="4" fill="#9ab0d4" />
            <path d="M0 0h4M0 0v4" stroke="#5a688a" strokeWidth="1" />
          </pattern>
        </defs>
      </Defs>
      <Page>
        <TitleBar>
          <Svg width="16" height="16" viewBox="0 0 16 16">
            <path d="M8 1l7 7-7 7-7-7z" fill="#b8b8dc" />
            <path d="M0 8h16" stroke="#3a3a80" strokeWidth="1.5" />
          </Svg>
          <TitleText>{title}</TitleText>
          <WinButtons>
            <WinButton $w={27} $first>
              <Svg width="12" height="6" viewBox="0 0 12 6"><rect y="2" width="11" height="3" fill="#fff" /></Svg>
            </WinButton>
            <WinButton $w={26}>
              <Svg width="12" height="11" viewBox="0 0 12 11"><path d="M3 1h8v7M1 3h7v7H1z" fill="none" stroke="#fff" strokeWidth="1.5" /></Svg>
            </WinButton>
            <WinButton $w={47} $close>
              <Svg width="12" height="10" viewBox="0 0 12 10"><path d="M1 1l10 8M11 1L1 9" stroke="#fff" strokeWidth="2.4" /></Svg>
            </WinButton>
          </WinButtons>
        </TitleBar>

        <MenuBar>
          <AppGlyph />
          {menus.map(([a, u, b, w]) => (
            <MenuItem key={a + u + b} $w={w}>{a}<u>{u}</u>{b}</MenuItem>
          ))}
          <Svg width="16" height="14" viewBox="0 0 16 14">
            <path d="M1 1v10l3-2 2 4 2-1-2-4h3z" fill="#111" />
            <text x="9" y="8" fontSize="9" fontWeight="700" fontFamily="Liberation Sans" fill="#111">?</text>
          </Svg>
          <MdiGroup>
            <MdiButton><Svg width="9" height="9" viewBox="0 0 9 9"><rect x="1" y="6" width="7" height="2" fill="#55697c" /></Svg></MdiButton>
            <MdiButton><Svg width="11" height="9" viewBox="0 0 11 9"><path d="M3 2V0.5h7V6H8M1 3h7v5.5H1z" fill="none" stroke="#55697c" /></Svg></MdiButton>
            <MdiButton><Svg width="9" height="9" viewBox="0 0 9 9"><path d="M1 1l7 7M8 1L1 8" stroke="#55697c" strokeWidth="2" /></Svg></MdiButton>
          </MdiGroup>
        </MenuBar>

        <ToolRow>
          <ToolGroup $first>{tools(["new", "open", "save", "print", "dbDown", "dbUp"])}</ToolGroup>
          <ToolGroup>
            <Pressed><Icon n="wire" /></Pressed>
            {tools(["hidden", "shaded"])}
          </ToolGroup>
          <ToolGroup>{tools(["move", "rotate", "zoom", "boxZoom", "fit", "cycle"])}</ToolGroup>
          <ToolGroup>{tools(["rail", "rail2"])}</ToolGroup>
          <ToolGroup>
            <Pressed><Icon n="select" /></Pressed>
            <FlatCombo $w={105}>All<ComboDrop /></FlatCombo>
            <ToolSlot $w={22}><Icon n="overlay" /></ToolSlot>
            <ThinRule />
            <ToolSlot $w={22}><Icon n="graycube" /></ToolSlot>
            <ToolSlot><Icon n="redRect" fly /></ToolSlot>
            <ToolSlot><Icon n="redOval" fly /></ToolSlot>
            <Pressed><Icon n="orangeCube" /></Pressed>
          </ToolGroup>
          <ToolGroup>{tools(["lSplit", "table"])}</ToolGroup>
          <ToolGroup>{tools(["cubeWire", "cubeOpen", "cubeGold"])}</ToolGroup>
          <ToolGap />
          <ToolGroup>{tools(["info"])}</ToolGroup>
          <ToolGroup>{tools(["ov1", "ov2", "ov3", "arrowBox", "undo", "redo", "boxes", "table"])}</ToolGroup>
          <ToolGroup>
            <ToolSlot><Icon n="palette" /></ToolSlot>
            <FlatCombo $w={120}>Mesh defaults<ComboDrop /></FlatCombo>
            <ToolSlot $w={28}><Icon n="oliveCube" /></ToolSlot>
            <BareDrop />
          </ToolGroup>
        </ToolRow>

        <Body>
          <LeftPanel>
            <Tabs>
              <Tab $on $w={52}>Model</Tab>
              <Tab $w={51}>Results</Tab>
            </Tabs>
            <PanelFrame>
              <DbRow>
                <DbCombo>
                  <Svg width="19" height="16" viewBox="0 0 18 16">
                    <path d="M2 3c0-3 14-3 14 0v10c0 3-14 3-14 0z" fill="#e0b838" stroke="#222" />
                    <path d="M2 3c0 3 14 3 14 0M2 7c0 3 14 3 14 0M2 10c0 3 14 3 14 0" fill="none" stroke="#222" />
                  </Svg>
                  Model Database
                  <ComboDrop />
                </DbCombo>
                <DbSlot $w={12}>
                  <Svg width="11" height="20" viewBox="0 0 11 20"><path d="M5.5 1l5 6H.5zM5.5 19l5-6H.5z" fill="#b8b8b8" /></Svg>
                </DbSlot>
                <DbSlot $w={34}>
                  <Svg width="16" height="14" viewBox="0 0 16 14"><path d="M1 3h5l1 1h8v9H1z" fill="none" stroke="#b0b0b0" /><path d="M8 11V6M6 8l2-2 2 2" fill="none" stroke="#b0b0b0" /></Svg>
                </DbSlot>
                <DbSlot $w={20}>
                  <Svg width="16" height="16" viewBox="0 0 16 16"><path d="M1 1h4v4H1zM6 6h4v4H6zM11 11h4v4h-4zM3 5v3h3M8 10v3h3" fill="none" stroke="#b4b4b4" /></Svg>
                </DbSlot>
                <DbSlot $w={28}>
                  <Svg width="14" height="18" viewBox="0 0 14 18"><circle cx="7" cy="7" r="5" fill="#f0e030" stroke="#555" /><path d="M5 12h4v4H5z" fill="#2e7a3a" /><path d="M7 0v1M0 7h1M13 7h1M2 2l1 1M12 2l-1 1" stroke="#555" /></Svg>
                </DbSlot>
              </DbRow>
              <TreeBox>
                <TreeRows>
                  {tree.map((r) => (
                    <Row key={r.t}>
                      {r.cells.map((k, i) => (
                        <Cell key={i} $k={k}>
                          {i === r.cells.length - 1 && (r.plus || r.minus) && <Expander $open={r.minus} />}
                        </Cell>
                      ))}
                      {r.i && <TreeIcon><Icon n={r.i} box={18} /></TreeIcon>}
                      <Label $sel={r.sel} $model={r.model}>{r.t}</Label>
                    </Row>
                  ))}
                </TreeRows>
              </TreeBox>
              <HScroll>
                <ScrollArrow $left />
                <ScrollThumb />
                <ScrollArrow />
              </HScroll>
            </PanelFrame>
          </LeftPanel>

          <RightPane>
            <ContextBar>
              <CtxLabel $w={48}>Module:</CtxLabel>
              <CtxDropCombo w={108} mr={13} text="Mesh" on />
              <CtxLabel $w={41}>Model:</CtxLabel>
              <CtxDropCombo w={166} mr={13} text="Concentraçãodetensões" />
              <CtxLabel $w={42}>Object:</CtxLabel>
              <Radio $mr={5} />
              <CtxLabel $w={54}>Assembly</CtxLabel>
              <Radio $on $mr={4} />
              <CtxLabel $w={28}>Part:</CtxLabel>
              <CtxDropCombo w={87} text="PlacaFina" />
            </ContextBar>
            <WorkRow>
              <Toolbox>
                {toolbox.map((s, i) => (
                  <ToolSection key={i} $top={s.top} $last={s.last} $bottom={i === 2 ? 1 : 0}>
                    {s.items.map((it) => <Icon key={it.n} n={it.n} fly={it.fly} />)}
                  </ToolSection>
                ))}
              </Toolbox>
              <Viewport>
                <Mesh />
                <MiniTriad />
                <Triad />
              </Viewport>
            </WorkRow>
            <LogoStrip>
              <DsLogo />
              <SimuliaText>SIMULIA</SimuliaText>
            </LogoStrip>
          </RightPane>
        </Body>

        <MessageRow>
          <MsgTabs>
            <MsgTab><Icon n="note" /></MsgTab>
            <MsgTabB><YellowBtn>›››</YellowBtn></MsgTabB>
          </MsgTabs>
          <MsgBox>{messages}</MsgBox>
          <Grip />
        </MessageRow>
      </Page>
    </>
  );
}
